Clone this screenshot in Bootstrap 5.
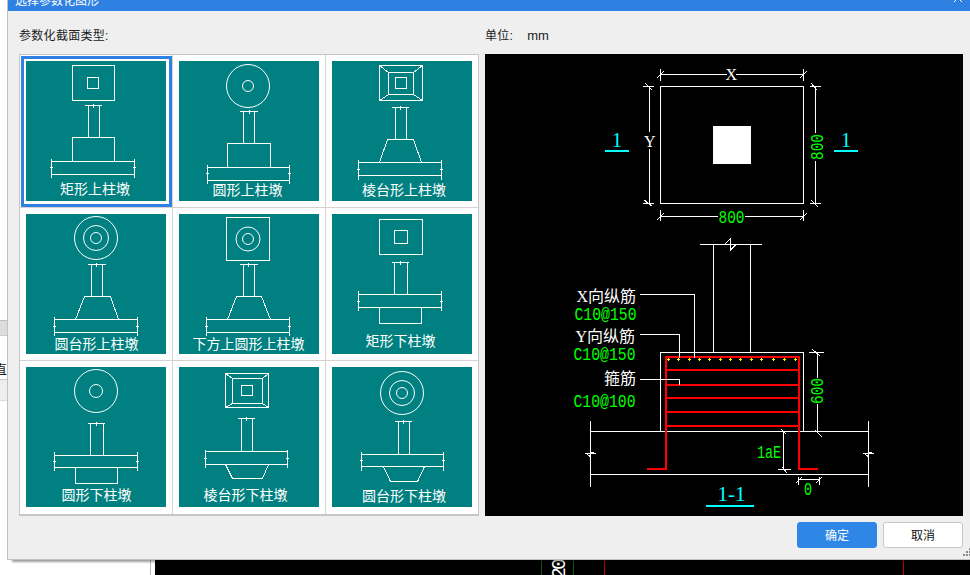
<!DOCTYPE html>
<html lang="zh-CN">

<head>
    <meta charset="UTF-8">
    <meta name="viewport" content="width=device-width, initial-scale=1.0">
    <title>选择参数化图形</title>
    <link href="https://cdn.jsdelivr.net/npm/bootstrap@5.3.2/dist/css/bootstrap.min.css" rel="stylesheet">
    <style>
        body {
            margin: 0;
            background: #fff;
            font-family: "Liberation Sans", "Noto Sans CJK SC", sans-serif;
            font-size: 12px;
        }

        /* desktop behind the dialog */
        .desk {
            position: relative;
            width: 970px;
            height: 575px;
            overflow: hidden;
            background: #fff;
        }

        .back-band1 { position: absolute; left: 0; top: 320px; width: 20px; height: 16px; background: #dcdcdc; border-top: 1px solid #bbb; border-bottom: 1px solid #ccc; }
        .back-band2 { position: absolute; left: 0; top: 379px; width: 20px; height: 22px; background: #eee; border-top: 1px solid #c8c8c8; border-bottom: 1px solid #ddd; }
        .back-char { position: absolute; left: -6px; top: 361px; font-size: 13px; line-height: 18px; color: #222; }
        .back-line { position: absolute; left: 150px; top: 555px; width: 1px; height: 20px; background: #bbb; }
        .back-canvas { position: absolute; left: 155px; top: 555px; width: 815px; height: 20px; background: #000; }
        .back-canvas svg { display: block; }

        /* dialog */
        .dlg {
            position: absolute;
            left: 7px;
            top: -20px;
            width: 963px;
            height: 580px;
            background: #efefef;
            border-left: 1px solid #bcc2c8;
            border-bottom: 1px solid #bcc2c8;
            box-shadow: 4px 3px 2px -1px rgba(0, 0, 0, .38);
        }

        .dlg-head {
            height: 31px;
            padding: 13px 7px 0 7px;
            background: #2e80e2;
            color: #fff;
            font-size: 12px;
            line-height: 17px;
        }

        .dlg-body {
            padding: 15px 7px 0 11px;
            gap: 6px;
        }

        .left-col { width: 460px; }
        .right-col { width: 478px; }

        .col-label {
            height: 18px;
            margin-bottom: 10px;
            line-height: 20px;
            font-size: 12px;
            letter-spacing: .3px;
            color: #222;
            gap: 14px;
        }

        .unit-val { font-size: 13px; letter-spacing: 0; }

        .type-grid {
            grid-template-columns: repeat(3, 152px);
            grid-template-rows: 152px 152px 153px;
            gap: 1px;
            height: 462px;
            background: #d2d2d2;
            border: 1px solid #c6c6c6;
            border-bottom-width: 2px;
        }

        .type-cell {
            position: relative;
            padding: 6px;
            background: #fff;
        }

        .type-cell.is-on::after {
            content: "";
            position: absolute;
            top: 1px;
            left: 1px;
            right: 0;
            bottom: 0;
            border: 3px solid #2e80e2;
        }

        .type-cell svg {
            display: block;
            width: 140px;
            height: 140px;
            background: #008080;
        }

        .cad { fill: none; stroke: #fff; stroke-width: 1; shape-rendering: crispEdges; }
        .cad-arc { fill: none; stroke: #fff; stroke-width: 1; }
        .cap { fill: #fff; font-family: "Noto Sans CJK SC", sans-serif; font-size: 14px; }

        .sheet {
            display: block;
            width: 478px;
            height: 462px;
            background: #000;
        }

        .solid { fill: #fff; }
        .rebar { fill: none; stroke: #f00; stroke-width: 2; shape-rendering: crispEdges; }
        .dots { fill: none; stroke: #ff0; stroke-width: 1; shape-rendering: crispEdges; }
        .cyan-bar { fill: none; stroke: #0ff; stroke-width: 2; shape-rendering: crispEdges; }
        .t-w { fill: #fff; font-family: "Liberation Serif", "Noto Sans CJK SC", serif; font-size: 16px; }
        .t-g { fill: #0f0; font-family: "Liberation Mono", monospace; font-size: 18px; }
        .t-c { fill: #0ff; font-family: "Liberation Serif", serif; font-size: 20px; }

        .dlg-foot {
            margin-top: 6px;
            padding-right: 7px;
            gap: 6px;
        }

        .dlg-btn {
            width: 80px;
            height: 26px;
            padding: 1px 0 0;
            font-size: 12px;
            line-height: 24px;
            border-radius: 3px;
        }

        .dlg-btn.btn-primary { background: #2e86e6; border-color: #2e86e6; color: #fff; }
        .dlg-btn.btn-light { background: #fff; border-color: #c8c8c8; color: #111; }

        .grip { position: absolute; left: 955px; top: 568px; }
    </style>
</head>

<body>
    <div class="desk">
        <!-- app behind the dialog -->
        <div class="back-band1"></div>
        <div class="back-char">直</div>
        <div class="back-band2"></div>
        <div class="back-line"></div>
        <div class="back-canvas">
            <svg width="815" height="20">
                <path d="M386.5 0V20M418.5 0V20" stroke="#0a5a0a" fill="none"/>
                <path d="M449.5 0V20M748.5 0V20" stroke="#c00000" fill="none"/>
                <text transform="translate(410 24) rotate(-90)" fill="#fff" font-family="Liberation Mono" font-size="20" letter-spacing="-3">20</text>
            </svg>
        </div>

        <div class="dlg">
            <div class="dlg-head d-flex justify-content-between">
                <span>选择参数化图形</span>
                <svg width="10" height="10" viewBox="0 0 10 10"><path d="M1 1L9 9M9 1L1 9" stroke="#fff" fill="none"/></svg>
            </div>

            <div class="dlg-body d-flex">
                <div class="left-col">
                    <div class="col-label">参数化截面类型:</div>
                    <div class="type-grid d-grid">
                        <!-- row 1 -->
                        <div class="type-cell is-on">
                            <svg viewBox="0 0 140 140">
                                <path class="cad" d="M46.5 4.5H88.5V39.5H46.5ZM61.5 16.5H72.5V27.5H61.5ZM58.5 44.5H75.5M67 43V47M62.5 44.5V76.5M73.5 44.5V76.5M46.5 76.5H88.5V100.5H46.5ZM25.5 100.5H108.5V113.5H25.5ZM25.5 97.5V116.5M108.5 97.5V116.5M24 106H27M107 106H110"/>
                                <text class="cap" x="34" y="133">矩形上柱墩</text>
                            </svg>
                        </div>
                        <div class="type-cell">
                            <svg viewBox="0 0 140 140">
                                <circle class="cad-arc" cx="69" cy="25" r="21.5"/>
                                <circle class="cad-arc" cx="69" cy="25" r="5.5"/>
                                <path class="cad" d="M60.5 50.5H78.5M70 49V53M64.5 50.5V82.5M75.5 50.5V82.5M48.5 82.5H91.5V106.5H48.5ZM28.5 106.5H110.5V119.5H28.5ZM28.5 103.5V122.5M110.5 103.5V122.5M27 112H30M109 112H112"/>
                                <text class="cap" x="33.5" y="134">圆形上柱墩</text>
                            </svg>
                        </div>
                        <div class="type-cell">
                            <svg viewBox="0 0 140 140">
                                <path class="cad" d="M47.5 4.5H90.5V39.5H47.5ZM56.5 11.5H81.5V33.5H56.5ZM63.5 16.5H74.5V27.5H63.5ZM47.5 4.5L56.5 11.5M90.5 4.5L81.5 11.5M47.5 39.5L56.5 33.5M90.5 39.5L81.5 33.5M59.5 46.5H76.5M68 45V49M63.5 46.5V78.5M74.5 46.5V78.5"/>
                                <path class="cad" d="M55.5 78.5H81.5L89.5 101.5H47.5ZM26.5 101.5H109.5V114.5H26.5ZM26.5 99V118.5M109.5 99V118.5M25 108H28M108 108H111"/>
                                <text class="cap" x="30" y="134">棱台形上柱墩</text>
                            </svg>
                        </div>

                        <!-- row 2 -->
                        <div class="type-cell">
                            <svg viewBox="0 0 140 140">
                                <circle class="cad-arc" cx="70" cy="24" r="21.5"/>
                                <circle class="cad-arc" cx="70" cy="24" r="12.5"/>
                                <circle class="cad-arc" cx="70" cy="24" r="5.5"/>
                                <path class="cad" d="M61.5 50.5H79.5M70 49V53M65.5 50.5V82.5M76.5 50.5V82.5M58.5 82.5H84.5L92.5 105.5H49.5ZM28.5 105.5H111.5V118.5H28.5ZM28.5 102.5V122M111.5 102.5V122M27 112H30M110 112H113"/>
                                <text class="cap" x="28.5" y="135">圆台形上柱墩</text>
                            </svg>
                        </div>
                        <div class="type-cell">
                            <svg viewBox="0 0 140 140">
                                <circle class="cad-arc" cx="69" cy="25" r="12"/>
                                <circle class="cad-arc" cx="69" cy="25" r="5.5"/>
                                <path class="cad" d="M47.5 3.5H90.5V46.5H47.5ZM60.5 50.5H78.5M69.5 49V53M64.5 50.5V82.5M75.5 50.5V82.5M57.5 82.5H82.5L91.5 105.5H48.5ZM27.5 105.5H110.5V118.5H27.5ZM27.5 102.5V122M110.5 102.5V122M26 112H29M109 112H112"/>
                                <text class="cap" x="13.5" y="135">下方上圆形上柱墩</text>
                            </svg>
                        </div>
                        <div class="type-cell">
                            <svg viewBox="0 0 140 140">
                                <path class="cad" d="M47.5 5.5H90.5V40.5H47.5ZM62.5 16.5H75.5V29.5H62.5ZM59.5 48.5H76.5M68 47V51M62.5 48.5V80.5M75.5 48.5V80.5M26.5 80.5H109.5V93.5H26.5ZM26.5 77V97M109.5 77V97M25 87H28M108 87H111M47.5 93.5V109.5H89.5V93.5"/>
                                <text class="cap" x="33.5" y="131.5">矩形下柱墩</text>
                            </svg>
                        </div>

                        <!-- row 3 -->
                        <div class="type-cell">
                            <svg viewBox="0 0 140 140">
                                <circle class="cad-arc" cx="70" cy="24" r="21.5"/>
                                <circle class="cad-arc" cx="70" cy="24" r="6.5"/>
                                <path class="cad" d="M61.5 56.5H78.5M70 55V59M64.5 56.5V88.5M77.5 56.5V88.5M28.5 88.5H111.5V100.5H28.5ZM28.5 84.5V104M111.5 84.5V104M27 94H30M110 94H113M49.5 100.5V116.5H91.5V100.5"/>
                                <text class="cap" x="35.500" y="133">圆形下柱墩</text>
                            </svg>
                        </div>
                        <div class="type-cell">
                            <svg viewBox="0 0 140 140">
                                <path class="cad" d="M46.5 6.5H89.5V40.5H46.5ZM53.5 11.5H83.5V36.5H53.5ZM62.5 18.5H73.5V28.5H62.5ZM46.5 6.5L53.5 11.5M89.5 6.5L83.5 11.5M46.5 40.5L53.5 36.5M89.5 40.5L83.5 36.5M58.5 51.5H75.5M67.5 50V54M62.5 51.5V84.5M73.5 51.5V84.5M26.5 84.5H108.5V97.5H26.5ZM26.5 82.5V101M108.5 82.5V101M25 91H28M107 91H110"/>
                                <path class="cad" d="M46.5 97.5L53.5 111.5H83.5L89.5 97.5"/>
                                <text class="cap" x="24.5" y="133">棱台形下柱墩</text>
                            </svg>
                        </div>
                        <div class="type-cell">
                            <svg viewBox="0 0 140 140">
                                <circle class="cad-arc" cx="70" cy="26" r="21.5"/>
                                <circle class="cad-arc" cx="70" cy="26" r="12.5"/>
                                <circle class="cad-arc" cx="70" cy="26" r="5.5"/>
                                <path class="cad" d="M62.5 54.5H79.5M71 53V57M66.5 54.5V87.5M77.5 54.5V87.5M29.5 87.5H111.5V99.5H29.5ZM29.5 85V104M111.5 85V104M28 93H31M110 93H113"/>
                                <path class="cad" d="M51.5 99.5L58.5 114.5H85.5L92.5 99.5"/>
                                <text class="cap" x="30" y="134">圆台形下柱墩</text>
                            </svg>
                        </div>
                    </div>
                </div>

                <div class="right-col">
                    <div class="col-label d-flex"><span>单位:</span><span class="unit-val">mm</span></div>
                    <!-- viewBox is in page pixels so the drawing can be read against the screenshot -->
                    <svg class="sheet" viewBox="485 54 478 462">
                        <!-- plan -->
                        <path class="cad" d="M660.5 86.5H803.5V203.5H660.5Z"/>
                        <rect class="solid" x="713" y="126" width="38" height="38"/>
                        <path class="cad" d="M660.5 74.5H727M736 74.5H803.5M660.5 69V81M803.5 69V81M657 78L664 71M800 78L807 71"/>
                        <path class="cad" d="M649.5 86.5V132M649.5 149V203.5M643 86.5H654M643 203.5H654M645 83L652 90M644 200L652 206"/>
                        <path class="cad" d="M815.5 86.5V133M815.5 161V203.5M810 86.5H821M810 203.5H821M811 83L817 90M811 200L818 207"/>
                        <path class="cad" d="M660.5 216.5H718M745 216.5H803.5M660.5 210V221M803.5 210V221M657 220L664 213M800 220L807 213"/>
                        <text class="t-w" x="725.5" y="79.500">X</text>
                        <text class="t-w" x="644" y="146.500">Y</text>
                        <text class="t-g" x="718.500" y="223" textLength="26" lengthAdjust="spacingAndGlyphs">800</text>
                        <text class="t-g" transform="translate(822.500 160) rotate(-90)" textLength="26" lengthAdjust="spacingAndGlyphs">800</text>
                        <text class="t-c" x="612" y="146.500">1</text>
                        <path class="cyan-bar" d="M605 151H629"/>
                        <text class="t-c" x="841" y="146.500">1</text>
                        <path class="cyan-bar" d="M834 151H858"/>

                        <!-- section -->
                        <path class="cad" d="M700 244.500H762M713.500 244.500V352.500M750.500 244.500V352.500M660.500 431.500V352.500H803.500V431.500"/>
                        <path class="cad" d="M725 244.300L730 239.300V250.700L735.700 245"/>
                        <path class="cad" d="M590.500 431.500H868.500M590.500 474.500H868.500M590.500 421V487M868.500 421V487"/>
                        <path class="cad" d="M585 453.500H595.500L590 451.500M587 454L590.500 457M863 453.500H873.500L868 451.500M865 454L868.500 457"/>
                        <path class="rebar" d="M647 469H666V357H799V469H818M666 370H799M666 385H799M666 398H799M666 412H799M666 426H799"/>
                        <path class="dots" d="M666.500 359.500H669.500M668 358V361M677 359.500H680M678.500 358V361M688 359.500H691M689.500 358V361M698 359.500H701M699.500 358V361M708 359.500H711M709.500 358V361M719 359.500H722M720.500 358V361M729 359.500H732M730.500 358V361M739 359.500H742M740.500 358V361M750 359.500H753M751.500 358V361M760 359.500H763M761.500 358V361M772 359.500H775M773.500 358V361M783 359.500H786M784.500 358V361M794 359.500H797M795.500 358V361"/>
                        <path class="cad" d="M639.500 294.500H694.500V357.500M639.500 334.500H679.500V357.500M639.500 379.500H679.500V384.500"/>
                        <text class="t-w" x="636" y="302" text-anchor="end">X向纵筋</text>
                        <text class="t-g" x="574.500" y="320" textLength="62" lengthAdjust="spacingAndGlyphs">C10@150</text>
                        <text class="t-w" x="635" y="342" text-anchor="end">Y向纵筋</text>
                        <text class="t-g" x="573.500" y="360" textLength="62" lengthAdjust="spacingAndGlyphs">C10@150</text>
                        <text class="t-w" x="636" y="384" text-anchor="end">箍筋</text>
                        <text class="t-g" x="573.500" y="407" textLength="62" lengthAdjust="spacingAndGlyphs">C10@100</text>

                        <path class="cad" d="M809 352.500H824M817.500 352.500V378M817.500 404V431.500M812 349L820 356M815 430L822 437"/>
                        <text class="t-g" transform="translate(822.500 404) rotate(-90)" textLength="26" lengthAdjust="spacingAndGlyphs">600</text>
                        <path class="cad" d="M783.500 431.500V469.500M778 469.500H791M781 429L786 434M782 467L787 473"/>
                        <text class="t-g" x="757" y="457.500" textLength="24" lengthAdjust="spacingAndGlyphs">1aE</text>
                        <path class="cad" d="M798.500 479.500H819M798.500 476.500V485M819 476.500V485M796 483L802 477M816 483L822 477"/>
                        <text class="t-g" x="804" y="495" textLength="8" lengthAdjust="spacingAndGlyphs">0</text>
                        <text class="t-c" x="717.500" y="501" textLength="28" lengthAdjust="spacingAndGlyphs">1-1</text>
                        <path class="cyan-bar" d="M706 506H754"/>
                    </svg>
                </div>
            </div>

            <div class="dlg-foot d-flex justify-content-end">
                <button type="button" class="btn btn-primary dlg-btn">确定</button>
                <button type="button" class="btn btn-light dlg-btn">取消</button>
            </div>

            <svg class="grip" width="8" height="8" viewBox="0 0 8 8">
                <path d="M6 0h2v2H6zM3 3h2v2H3zM6 3h2v2H6zM0 6h2v2H0zM3 6h2v2H3zM6 6h2v2H6z" fill="#8c8c8c"/>
            </svg>
        </div>
    </div>

    <script src="https://cdn.jsdelivr.net/npm/bootstrap@5.3.2/dist/js/bootstrap.bundle.min.js"></script>
</body>

</html>
